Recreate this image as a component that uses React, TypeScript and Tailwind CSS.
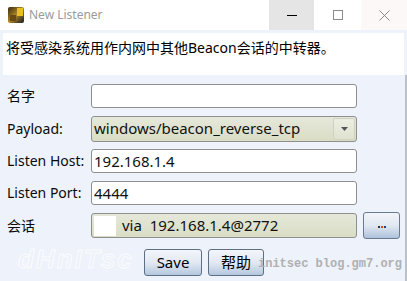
import React from "react";

const font = { fontFamily: '"Noto Sans", "Noto Sans CJK SC", sans-serif' };

function Field({ label, children }: { label: string; children: React.ReactNode }) {
  return (
    <div className="flex items-center h-[24px]">
      <div className="w-[84px] text-[14px] text-[#0a0a0a] leading-none">{label}</div>
      {children}
    </div>
  );
}

export default function App() {
  return (
    <div className="w-[407px] h-[281px] bg-[#eef2fa] overflow-hidden flex flex-col relative" style={font}>
      {/* title bar */}
      <div className="h-[30px] bg-white flex items-center shrink-0">
        <div className="ml-[8px] w-[16px] h-[16px] rounded-[2px] bg-gradient-to-br from-[#3a2a10] via-[#b08a20] to-[#1a1a1a] relative overflow-hidden">
          <div className="absolute right-[1px] top-[1px] w-[6px] h-[8px] bg-[#e8c020]" />
          <div className="absolute left-[2px] bottom-[2px] w-[6px] h-[6px] bg-[#6a4a18]" />
        </div>
        <div className="ml-[5px] text-[12px] text-[#9a9a9a]">New Listener</div>
        <div className="ml-auto flex h-full">
          <div className="w-[45px] h-full bg-[#e5e5e5] flex items-center justify-center">
            <div className="w-[10px] h-[1px] bg-black" />
          </div>
          <div className="w-[47px] h-full flex items-center justify-center">
            <div className="w-[10px] h-[10px] border border-[#8a8a8a]" />
          </div>
          <div className="w-[46px] h-full bg-[#fdf8f8] flex items-center justify-center">
            <svg width="11" height="11" viewBox="0 0 11 11">
              <path d="M0.5 0.5 L10.5 10.5 M10.5 0.5 L0.5 10.5" stroke="#8a8a8a" strokeWidth="1" />
            </svg>
          </div>
        </div>
      </div>

      {/* description */}
      <div className="mx-[3px] mt-[3px] h-[42px] bg-white px-[3px] pt-[6px] text-[14px] text-black leading-[17px]">
        将受感染系统用作内网中其他Beacon会话的中转器。
      </div>

      {/* form */}
      <div className="ml-[7px] mt-[9px] flex flex-col gap-[8px]">
        <Field label="名字">
          <div className="w-[266px] h-[24px] bg-white border border-[#8f8f8f] rounded-[3px]" />
        </Field>
        <div className="h-[25px] flex items-center">
          <div className="w-[84px] text-[14px] text-[#0a0a0a] leading-none">Payload:</div>
          <div className="w-[266px] h-[26px] border border-[#8f8f8f] rounded-[3px] bg-gradient-to-b from-[#e6e8da] to-[#d9ddc4] flex items-center">
            <div className="flex-1 pl-[2px] text-[15px] text-[#111] leading-none">windows/beacon_reverse_tcp</div>
            <div className="w-[22px] h-[22px] mr-[1px] border border-[#cfd2c0] rounded-[2px] bg-gradient-to-b from-[#eceee2] to-[#dfe2cf] flex items-center justify-center">
              <svg width="7" height="4" viewBox="0 0 7 4">
                <path d="M0 0 L7 0 L3.5 4 Z" fill="#555" />
              </svg>
            </div>
          </div>
        </div>
        <Field label="Listen Host:">
          <div className="w-[266px] h-[24px] bg-white border border-[#8f8f8f] rounded-[3px] flex items-center pl-[2px] text-[15px] text-[#111] leading-none">192.168.1.4</div>
        </Field>
        <Field label="Listen Port:">
          <div className="w-[266px] h-[24px] bg-white border border-[#8f8f8f] rounded-[3px] flex items-center pl-[2px] text-[15px] text-[#111] leading-none">4444</div>
        </Field>
        <div className="h-[25px] flex items-center">
          <div className="w-[84px] text-[14px] text-[#0a0a0a] leading-none">会话</div>
          <div className="w-[266px] h-[25px] border border-[#8f8f8f] rounded-[3px] bg-gradient-to-b from-[#e6e8da] to-[#d9ddc4] flex items-center">
            <div className="ml-[2px] w-[22px] h-[20px] bg-white" />
            <div className="ml-[6px] text-[15px] text-[#111] leading-none whitespace-pre">via  192.168.1.4@2772</div>
          </div>
          <div className="ml-[6px] w-[37px] h-[27px] border border-[#6a7a90] rounded-[3px] bg-gradient-to-b from-[#f2f5fa] via-[#e2e8f1] to-[#aec2db] flex items-center justify-center">
            <div className="flex gap-[1px] mt-[3px]">
              <div className="w-[2px] h-[2px] bg-[#333]" />
              <div className="w-[2px] h-[2px] bg-[#c05020]" />
              <div className="w-[2px] h-[2px] bg-[#204080]" />
            </div>
          </div>
        </div>
      </div>

      {/* buttons */}
      <div className="mt-[11px] flex pl-[144px] gap-[6px] relative">
        <div className="w-[58px] h-[27px] border border-[#5e6e84] rounded-[3px] bg-gradient-to-b from-[#f3f6fb] via-[#e3e9f2] to-[#b4c7df] flex items-center justify-center text-[15px] text-black">Save</div>
        <div className="w-[56px] h-[27px] border border-[#5e6e84] rounded-[3px] bg-gradient-to-b from-[#f3f6fb] via-[#e3e9f2] to-[#b4c7df] flex items-center justify-center text-[15px] text-black">帮助</div>
      </div>

      <div className="absolute left-[258px] top-[256px] text-[12px] font-bold text-[#b0b0b0] whitespace-pre leading-[16px]" style={{ fontFamily: '"Liberation Mono", monospace' }}>
        initsec blog.gm7.org
      </div>
      <div className="absolute left-[18px] top-[246px] text-[26px] font-bold italic text-transparent [-webkit-text-stroke:1px_#ffffff] leading-none tracking-[2px] opacity-80" style={{ fontFamily: '"Liberation Sans", sans-serif' }}>
        dHnITsc
      </div>
      <div className="absolute right-0 top-[75px] w-[2px] h-[206px] bg-[#9aa0a8] opacity-60" />
    </div>
  );
}
